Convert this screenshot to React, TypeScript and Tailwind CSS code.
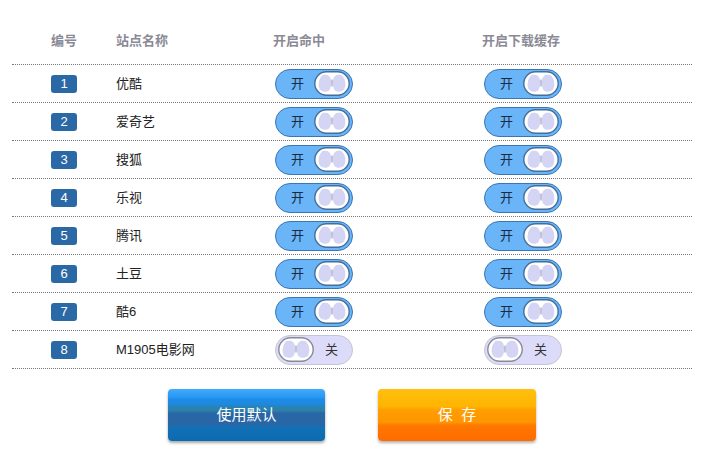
import React from "react";

const rows: { id: number; name: string; hit: boolean; cache: boolean }[] = [
  { id: 1, name: "优酷", hit: true, cache: true },
  { id: 2, name: "爱奇艺", hit: true, cache: true },
  { id: 3, name: "搜狐", hit: true, cache: true },
  { id: 4, name: "乐视", hit: true, cache: true },
  { id: 5, name: "腾讯", hit: true, cache: true },
  { id: 6, name: "土豆", hit: true, cache: true },
  { id: 7, name: "酷6", hit: true, cache: true },
  { id: 8, name: "M1905电影网", hit: false, cache: false },
];

function Knob({ on }: { on: boolean }) {
  return (
    <svg width="36" height="25" viewBox="0 0 36 25">
      <rect x="0.8" y="0.8" width="34.4" height="23.4" rx="11.7" fill="#ffffff" stroke={on ? "#456f98" : "#8a8a94"} strokeWidth="1.4" />
      <path d="M8.5 4 C13.5 3 16.5 5 17 9.5 C17.4 13 17 17.5 15 19.5 C12.5 21.5 8 21 6 18.5 C3.8 15.5 4 8 8.5 4 Z" fill="#d4d4f4" />
      <path d="M27.5 4 C22.5 3 19.5 5 19 9.5 C18.6 13 19 17.5 21 19.5 C23.5 21.5 28 21 30 18.5 C32.2 15.5 32 8 27.5 4 Z" fill="#d4d4f4" />
      <path d="M17.4 8.5 L17.7 15.5" stroke="#a8a8c0" strokeWidth="0.7" />
      <path d="M18.6 8.5 L18.3 15.5" stroke="#a8a8c0" strokeWidth="0.7" />
    </svg>
  );
}

function Toggle({ on }: { on: boolean }) {
  if (on) {
    return (
      <div className="flex items-center w-[78px] h-[30px] rounded-full border-[1.5px] border-[#3a76b4] bg-[#6ab4f8] pl-[15px] pr-[2px]">
        <span className="text-[13px] text-[#1a2a40] leading-none">开</span>
        <div className="ml-auto flex items-center">
          <Knob on />
        </div>
      </div>
    );
  }
  return (
    <div className="flex items-center w-[78px] h-[30px] rounded-full border-[1.5px] border-[#c4c4d4] bg-[#dcdcfa] pl-[2px] pr-[14px]">
      <div className="flex items-center">
        <Knob on={false} />
      </div>
      <span className="ml-auto text-[13px] text-[#333] leading-none">关</span>
    </div>
  );
}

export default function App() {
  return (
    <div
      className="w-[717px] h-[459px] bg-white"
      style={{ fontFamily: '"Liberation Sans", "Noto Sans CJK SC", sans-serif' }}
    >
      <div className="ml-[12px] w-[680px]">
        <div className="flex items-end h-[65px] pb-[14px] border-b border-dotted border-[#777] text-[13px] font-bold text-[#8a8a96]">
          <div className="w-[104px] pl-[39px]">编号</div>
          <div className="w-[157px]">站点名称</div>
          <div className="w-[209px]">开启命中</div>
          <div>开启下载缓存</div>
        </div>
        {rows.map((r) => (
          <div key={r.id} className="flex items-center h-[38px] border-b border-dotted border-[#777] text-[13px] text-[#222]">
            <div className="w-[104px] pl-[39px]">
              <div className="w-[26px] h-[18px] rounded-[3px] bg-[#2a68a6] text-white text-[13px] flex items-center justify-center leading-none">
                {r.id}
              </div>
            </div>
            <div className="w-[157px]">{r.name}</div>
            <div className="w-[209px] pl-[2px]">
              <Toggle on={r.hit} />
            </div>
            <div className="pl-[2px]">
              <Toggle on={r.cache} />
            </div>
          </div>
        ))}
      </div>
      <div className="flex mt-[20px] pl-[168px] gap-[53px]">
        <button className="w-[157px] h-[52px] rounded-[4px] text-white text-[15px] shadow-[0_2px_3px_rgba(0,0,0,0.35)] bg-[linear-gradient(to_bottom,#40aafc_0%,#2898f4_16%,#1e8ce6_20%,#1e88e0_30%,#2a84b2_34%,#2a80aa_42%,#2866a6_46%,#2866a6_68%,#1270b6_74%,#0c6ab0_100%)]">
          使用默认
        </button>
        <button className="w-[158px] h-[52px] rounded-[4px] text-white text-[15px] shadow-[0_2px_3px_rgba(0,0,0,0.3)] bg-[linear-gradient(to_bottom,#ffc010_0%,#ffb400_34%,#ff9e00_40%,#ff9600_64%,#ff7800_70%,#ff6c00_100%)]">
          保&nbsp;&nbsp;存
        </button>
      </div>
    </div>
  );
}
